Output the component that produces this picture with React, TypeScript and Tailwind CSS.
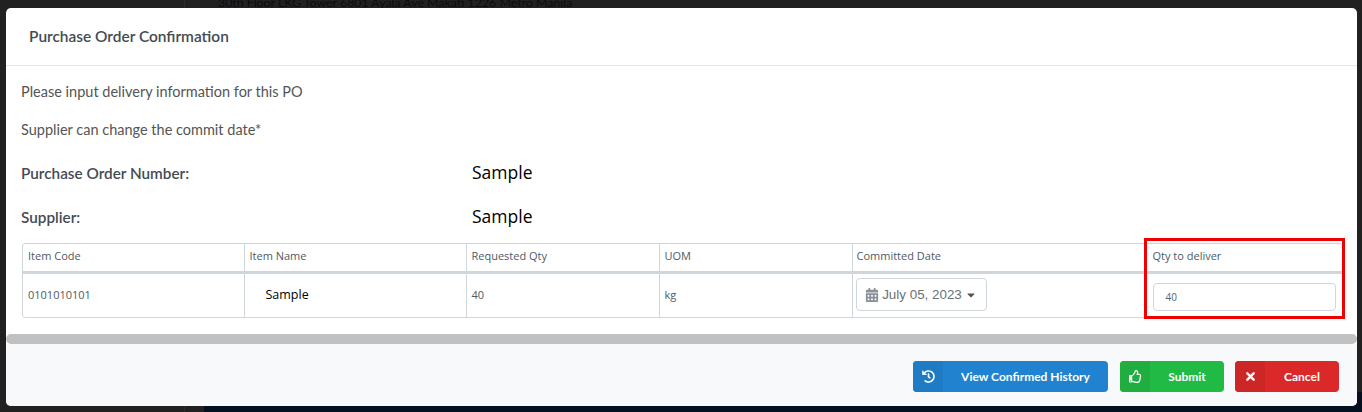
import React from "react";
import {
  FaCalendarAlt,
  FaCaretDown,
  FaHistory,
  FaRegThumbsUp,
  FaTimes,
} from "react-icons/fa";

const headers = [
  "Item Code",
  "Item Name",
  "Requested Qty",
  "UOM",
  "Committed Date",
  "Qty to deliver",
];

type ActionProps = {
  icon: React.ReactNode;
  label: string;
  width: string;
  face: string;
  shade: string;
};

const ActionButton = ({ icon, label, width, face, shade }: ActionProps) => {
  return (
    <button
      className={`flex h-[31px] items-stretch overflow-hidden rounded-[4px] text-white ${width} ${face}`}
    >
      <span className={`flex w-[30px] shrink-0 items-center justify-center text-[13px] ${shade}`}>
        {icon}
      </span>
      <span className="flex-1 text-center text-[12px] leading-[31px] font-bold">{label}</span>
    </button>
  );
};

const App = () => {
  return (
    <div className="relative h-[412px] w-[1362px] overflow-hidden bg-[#212121] font-['Lato',sans-serif]">
      {/* page behind the backdrop */}
      <div className="absolute top-0 bottom-0 left-[184px] w-px bg-[#2c2c2c]" />
      <div className="absolute top-[-6px] left-[218px] text-[12.35px] text-[#0c0c0c]">
        30th Floor LKG Tower 6801 Ayala Ave Makati 1226 Metro Manila
      </div>
      <div className="absolute right-0 bottom-0 left-[204px] h-[20px] bg-[#04101f]" />

      <div className="relative mt-2 ml-[6px] flex h-[398px] w-[1351px] flex-col overflow-hidden rounded-[5px] bg-white">
        <div className="h-[58px] shrink-0 border-b border-[#e4e7ea] px-[23px] pt-[18px] text-[15.45px] leading-[20px] font-semibold text-[#444b52]">
          Purchase Order Confirmation
        </div>

        <div className="flex-1 px-[15px] text-[14.5px] text-[#555]">
          <p className="mt-[16px] h-[20px] leading-[20px]">Please input delivery information for this PO</p>
          <p className="mt-[18px] h-[20px] leading-[20px]">Supplier can change the commit date*</p>

          <div className="mt-[23px] flex h-[20px] items-center">
            <span className="w-[451px] text-[15.3px] font-semibold text-[#444b52]">Purchase Order Number:</span>
            <span className="-mt-[2px] font-['Open_Sans',sans-serif] text-[17.5px] text-black">Sample</span>
          </div>
          <div className="mt-[24px] flex h-[20px] items-center">
            <span className="w-[451px] text-[15.3px] font-semibold text-[#444b52]">Supplier:</span>
            <span className="-mt-[2px] font-['Open_Sans',sans-serif] text-[17.5px] text-black">Sample</span>
          </div>

          <div className="mt-[16px] ml-px w-[1321px] overflow-hidden rounded-[3px] border border-[#cfd6dc] font-['Open_Sans',sans-serif] text-[11px] text-[#4f5a64]">
            <table className="w-full table-fixed border-collapse">
              <colgroup>
                <col className="w-[221px]" />
                <col className="w-[222px]" />
                <col className="w-[193px]" />
                <col className="w-[193px]" />
                <col className="w-[294px]" />
                <col />
              </colgroup>
              <thead>
                <tr className="h-[28px] border-b-[3px] border-[#cfd6dc]">
                  {headers.map((header, i) => (
                    <th
                      key={header}
                      className={`pb-[2px] text-left font-normal ${i === 4 ? "pl-[4px]" : i === 5 ? "pl-[6px]" : "pl-[5px]"} ${i > 0 ? "border-l border-[#cfd6dc]" : ""}`}
                    >
                      {header}
                    </th>
                  ))}
                </tr>
              </thead>
              <tbody>
                <tr className="h-[45px]">
                  <td className="pl-[5px]">0101010101</td>
                  <td className="border-l border-[#cfd6dc] pl-[21px] text-[12.5px] text-black">Sample</td>
                  <td className="border-l border-[#cfd6dc] pl-[5px]">40</td>
                  <td className="border-l border-[#cfd6dc] pl-[5px]">kg</td>
                  <td className="border-l border-[#cfd6dc] pl-[3px]">
                    <button className="-mt-px flex h-[33px] w-[131px] items-center justify-center gap-[3px] rounded-[4px] border border-[#cfd6dc] font-['Liberation_Sans',sans-serif] text-[13.4px] text-[#6a7178]">
                      <FaCalendarAlt className="text-[14px] text-[#8a9097]" />
                      <span>July 05, 2023</span>
                      <FaCaretDown className="text-[12px] text-[#555]" />
                    </button>
                  </td>
                  <td className="border-l border-[#cfd6dc] pl-[6px]">
                    <div className="mt-[4px] h-[28px] w-[183px] rounded-[4px] border border-[#cfd6dc] pl-[12px] text-[10px] leading-[26px] text-[#5a6168]">
                      40
                    </div>
                  </td>
                </tr>
              </tbody>
            </table>
          </div>
        </div>

        <div className="h-[10px] shrink-0 rounded-[5px] bg-[#c1c1c1]" />

        <div className="flex h-[62px] shrink-0 justify-end gap-[11px] bg-[#f8f9fb] pt-[17px] pr-[18px]">
          <ActionButton
            icon={<FaHistory />}
            label="View Confirmed History"
            width="mr-px w-[195px]"
            face="bg-[#2183d0]"
            shade="bg-[#1f7bc3]"
          />
          <ActionButton
            icon={<FaRegThumbsUp />}
            label="Submit"
            width="w-[104px]"
            face="bg-[#21ba45]"
            shade="bg-[#20ae41]"
          />
          <ActionButton
            icon={<FaTimes />}
            label="Cancel"
            width="w-[104px]"
            face="bg-[#db2828]"
            shade="bg-[#cd2626]"
          />
        </div>
      </div>

      {/* annotation drawn over the screenshot */}
      <div className="absolute top-[238px] left-[1144px] h-[81px] w-[201px] border-[3px] border-[#f00000]" />
    </div>
  );
};

export default App;
